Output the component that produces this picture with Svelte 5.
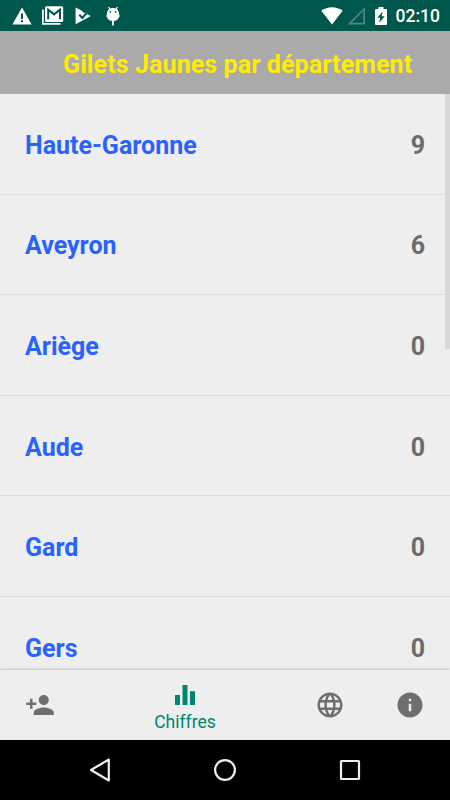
<script lang="ts">
	type Department = { name: string; count: number };

	const departments: Department[] = [
		{ name: 'Haute-Garonne', count: 9 },
		{ name: 'Aveyron', count: 6 },
		{ name: 'Ariège', count: 0 },
		{ name: 'Aude', count: 0 },
		{ name: 'Gard', count: 0 },
		{ name: 'Gers', count: 0 }
	];

	const tabs = [
		{
			id: 'join',
			label: 'Rejoindre',
			path: 'M15 12c2.21 0 4-1.79 4-4s-1.79-4-4-4-4 1.79-4 4 1.79 4 4 4zm-9-2V7H4v3H1v2h3v3h2v-3h3v-2H6zm9 4c-2.67 0-8 1.34-8 4v2h16v-2c0-2.66-5.33-4-8-4z'
		},
		{
			id: 'stats',
			label: 'Chiffres',
			path: 'M10 20h4V4h-4v16zm-6 0h4v-8H4v8zM16 9v11h4V9h-4z'
		},
		{
			id: 'web',
			label: 'Site',
			path: 'M11.99 2C6.47 2 2 6.48 2 12s4.47 10 9.99 10C17.52 22 22 17.52 22 12S17.52 2 11.99 2zm6.93 6h-2.95c-.32-1.25-.78-2.45-1.38-3.56 1.84.63 3.37 1.91 4.33 3.56zM12 4.04c.83 1.2 1.48 2.53 1.91 3.96h-3.82c.43-1.43 1.08-2.76 1.91-3.96zM4.26 14C4.1 13.36 4 12.69 4 12s.1-1.36.26-2h3.38c-.08.66-.14 1.32-.14 2 0 .68.06 1.34.14 2H4.26zm.82 2h2.95c.32 1.25.78 2.45 1.38 3.56-1.84-.63-3.37-1.9-4.33-3.56zm2.95-8H5.08c.96-1.66 2.49-2.93 4.33-3.56C8.81 5.55 8.35 6.75 8.03 8zM12 19.96c-.83-1.2-1.48-2.53-1.91-3.96h3.82c-.43 1.43-1.08 2.76-1.91 3.96zM14.34 14H9.66c-.09-.66-.16-1.32-.16-2 0-.68.07-1.35.16-2h4.68c.09.65.16 1.32.16 2 0 .68-.07 1.34-.16 2zm.25 5.56c.6-1.11 1.06-2.31 1.38-3.56h2.95c-.96 1.65-2.49 2.93-4.33 3.56zM16.36 14c.08-.66.14-1.32.14-2 0-.68-.06-1.34-.14-2h3.38c.16.64.26 1.31.26 2s-.1 1.36-.26 2h-3.38z'
		},
		{
			id: 'info',
			label: 'Infos',
			path: 'M12 2C6.48 2 2 6.48 2 12s4.48 10 10 10 10-4.48 10-10S17.52 2 12 2zm1 15h-2v-6h2v6zm0-8h-2V7h2v2z'
		}
	];

	let active = $state('stats');
</script>

<div class="screen">
	<div class="status-bar">
		<div class="notifications">
			<svg width="20" height="18" viewBox="0 0 20 18">
				<path d="M10 .5 19.6 17.5H.4z" fill="#fff" />
				<path d="M9 6.500h2V12H9zM9 13.300h2v2H9z" fill="#00574b" />
			</svg>
			<svg class="mail" width="22" height="19" viewBox="0 0 22 19">
				<path d="M.9 3.500v14.300h17.600" fill="none" stroke="#fff" stroke-width="1.700" />
				<rect x="3" y=".3" width="18.200" height="15.800" rx="1.500" fill="#fff" />
				<path d="M6.200 13.200V3.700l5.900 4.700L18 3.700v9.500" fill="none" stroke="#00574b" stroke-width="2" />
			</svg>
			<svg class="play" width="17" height="18" viewBox="0 0 17 18">
				<path d="M.6.400 6.500 3.400 9 6l4-1-.500 2.500L15.800 9 .6 17.300z" fill="#fff" />
				<path d="m4.300 7.800 3 3.200 5.400-6" fill="none" stroke="#00574b" stroke-width="2" />
			</svg>
			<svg class="droid" width="14" height="20" viewBox="0 0 14 20">
				<path d="M2.500 1 4.200 3.600M11.500 1 9.800 3.600" stroke="#fff" stroke-width="1.200" />
				<path
					d="M1 8c0-3.700 2.500-6 6-6s6 2.300 6 6l.5 1v2H13c-.5 2.500-3 4-6 4s-5.500-1.500-6-4H.5V9z"
					fill="#fff"
				/>
				<path d="M6.100 14.500h1.800v5H6.100z" fill="#fff" />
				<circle cx="4.400" cy="5.800" r=".9" fill="#00574b" />
				<circle cx="9.600" cy="5.800" r=".9" fill="#00574b" />
			</svg>
		</div>
		<div class="system">
			<svg width="22" height="18" viewBox="0 0 22 18">
				<path d="M.4 3.700C3.300 1.400 6.900.2 11 .2s7.700 1.200 10.600 3.500L11 17.500z" fill="#fff" />
			</svg>
			<svg class="signal" width="18" height="18" viewBox="0 0 18 18">
				<path d="M1.500 16.600h14.700V2z" fill="none" stroke="#4d8980" stroke-width="1.700" />
			</svg>
			<svg class="battery" width="12" height="18" viewBox="0 0 12 18">
				<path
					d="M3.500 0h5v2H11a1 1 0 0 1 1 1v14a1 1 0 0 1-1 1H1a1 1 0 0 1-1-1V3a1 1 0 0 1 1-1h2.500z"
					fill="#fff"
				/>
				<path d="M7.800 4.500 2.300 10.800h3l-1.200 5 5.700-6.500H6.700z" fill="#00574b" />
			</svg>
			<span class="clock">02:10</span>
		</div>
	</div>

	<header class="title-bar">
		<h1>Gilets Jaunes par département</h1>
	</header>

	<main class="list-area">
		<ul class="list">
			{#each departments as department (department.name)}
				<li class="row">
					<span class="name">{department.name}</span>
					<span class="count">{department.count}</span>
				</li>
			{/each}
		</ul>
		<div class="scrollbar"></div>
	</main>

	<nav class="tabs">
		{#each tabs as tab (tab.id)}
			<button
				class="tab"
				class:active={active === tab.id}
				type="button"
				aria-label={tab.label}
				onclick={() => (active = tab.id)}
			>
				<svg width="30" height="30" viewBox="0 0 24 24"><path d={tab.path} /></svg>
				{#if active === tab.id}
					<span class="tab-label">{tab.label}</span>
				{/if}
			</button>
		{/each}
	</nav>

	<div class="nav-bar">
		<svg width="24" height="24" viewBox="0 0 24 24">
			<path d="M20.800 1.500v21L3 12z" />
		</svg>
		<svg width="24" height="24" viewBox="0 0 24 24">
			<circle cx="12" cy="12" r="9.900" />
		</svg>
		<svg width="24" height="24" viewBox="0 0 24 24">
			<rect x="3" y="3" width="18" height="18" rx=".5" />
		</svg>
	</div>
</div>

<style>
	:global(body) {
		margin: 0;
		background: #000;
	}

	.screen {
		display: flex;
		flex-direction: column;
		height: 800px;
		overflow: hidden;
		background: #eee;
		font-family: Roboto, sans-serif;
	}

	.status-bar {
		display: flex;
		justify-content: space-between;
		flex: none;
		height: 31px;
		box-sizing: border-box;
		padding: 0 10px 0 12px;
		background: #00574b;
		color: #fff;
	}

	.notifications,
	.system {
		display: flex;
		align-items: center;
	}

	.mail {
		margin-left: 10px;
	}

	.play {
		margin-left: 11px;
	}

	.droid {
		margin-left: 14px;
	}

	.signal {
		margin-left: 5px;
	}

	.battery {
		margin-left: 9px;
	}

	.clock {
		margin-left: 9px;
		font-size: 17.5px;
		font-weight: 500;
		line-height: 20px;
	}

	.title-bar {
		display: flex;
		align-items: center;
		flex: none;
		height: 63px;
		box-sizing: border-box;
		padding: 4px 0 0 63px;
		background: #aaa;
	}

	.title-bar h1 {
		margin: 0;
		color: #ffeb00;
		font-size: 25px;
		font-weight: 700;
		letter-spacing: 0.1px;
		line-height: 30px;
		white-space: nowrap;
	}

	.list-area {
		position: relative;
		flex: none;
		height: 576px;
		overflow: hidden;
	}

	.list {
		margin: 0;
		padding: 0;
		list-style: none;
	}

	.row {
		display: flex;
		align-items: center;
		justify-content: space-between;
		height: 100.6px;
		box-sizing: border-box;
		padding: 4px 25px 0;
		border-bottom: 1px solid #dcdcdc;
		font-size: 25px;
		font-weight: 700;
		line-height: 30px;
	}

	.name {
		color: #2962ff;
	}

	.count {
		color: #6b6b6b;
	}

	.scrollbar {
		position: absolute;
		top: 0;
		right: 0;
		width: 5px;
		height: 255px;
		background: #d8d8d8;
	}

	.tabs {
		position: relative;
		display: flex;
		flex: none;
		height: 70px;
		background: #eee;
		box-shadow: 0 -1px 2px rgba(0, 0, 0, 0.16);
	}

	.tab {
		display: flex;
		flex-direction: column;
		align-items: center;
		width: 80px;
		padding: 20px 0 0;
		border: none;
		background: none;
		color: #6e6e6e;
		font-family: inherit;
		cursor: pointer;
	}

	.tab.active {
		width: 210px;
		padding-top: 10px;
		color: #008573;
	}

	.tab svg {
		fill: currentColor;
	}

	.tab-label {
		margin-top: 2px;
		font-size: 17.5px;
		line-height: 21px;
	}

	.nav-bar {
		display: flex;
		align-items: center;
		justify-content: space-between;
		flex: none;
		height: 60px;
		box-sizing: border-box;
		padding: 0 88px;
		background: #000;
	}

	.nav-bar svg {
		fill: none;
		stroke: #eee;
		stroke-width: 2.2;
		stroke-linejoin: round;
	}
</style>
